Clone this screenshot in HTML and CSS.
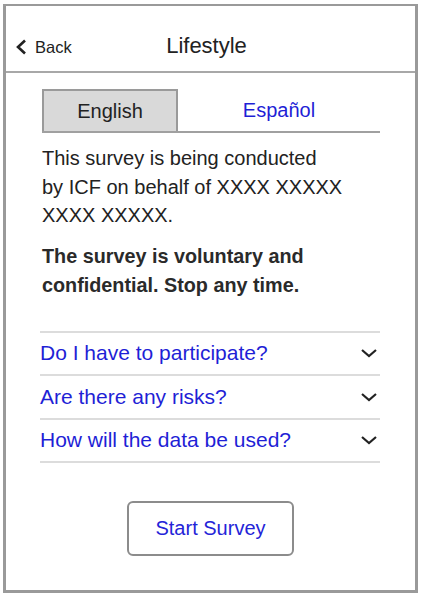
FILE: index.html
```html
<!DOCTYPE html>
<html lang="en">
<head>
  <meta charset="UTF-8" />
  <meta name="viewport" content="width=device-width, initial-scale=1.0"/>
  <title>Lifestyle</title>
  <link rel="stylesheet" href="styles.css">
</head>
<body>
  <div class="phone">
    <header class="topbar">
      <a class="back" href="#">
        <svg width="12" height="16" viewBox="0 0 12 16"><polyline points="10,1.5 3,8 10,14.5" fill="none" stroke="#222" stroke-width="2.6"/></svg>
        <span>Back</span>
      </a>
      <h1>Lifestyle</h1>
    </header>

    <main class="content">
      <div class="tabs">
        <button class="tab active">English</button>
        <button class="tab">Español</button>
      </div>

      <p class="intro">This survey is being conducted<br>by ICF on behalf of XXXX XXXXX<br>XXXX XXXXX.</p>
      <p class="notice">The survey is voluntary and<br>confidential. Stop any time.</p>

      <ul class="faq">
        <li>
          <span>Do I have to participate?</span>
          <svg width="18" height="10" viewBox="0 0 18 10"><polyline points="2,2 9,8 16,2" fill="none" stroke="#222" stroke-width="2.2"/></svg>
        </li>
        <li>
          <span>Are there any risks?</span>
          <svg width="18" height="10" viewBox="0 0 18 10"><polyline points="2,2 9,8 16,2" fill="none" stroke="#222" stroke-width="2.2"/></svg>
        </li>
        <li>
          <span>How will the data be used?</span>
          <svg width="18" height="10" viewBox="0 0 18 10"><polyline points="2,2 9,8 16,2" fill="none" stroke="#222" stroke-width="2.2"/></svg>
        </li>
      </ul>

      <div class="actions">
        <button class="start">Start Survey</button>
      </div>
    </main>
  </div>
</body>
</html>
```

FILE: styles.css
```css
body {
  margin: 0;
  padding: 4px 6px 6px 3px;
  font-family: 'Liberation Sans', Arial, sans-serif;
  background: #fff;
  color: #222;
}
.phone {
  height: 584px;
  border: 3px solid #9a9a9a;
  border-top-width: 2px;
  display: flex;
  flex-direction: column;
}
.topbar {
  height: 67px;
  box-sizing: border-box;
  padding-top: 17px;
  border-bottom: 2px solid #a8a8a8;
  display: flex;
  align-items: center;
  position: relative;
}
.back {
  display: flex;
  align-items: center;
  gap: 8px;
  padding-left: 9px;
  color: #222;
  text-decoration: none;
  font-size: 16.5px;
  position: relative;
  z-index: 1;
}
.topbar h1 {
  position: absolute;
  left: 0;
  right: 0;
  top: 27px;
  margin: 0;
  text-align: center;
  font-size: 22px;
  font-weight: normal;
  padding-right: 8px;
}
.content {
  padding: 16px 35px 0 36px;
}
.tabs {
  display: flex;
  border-bottom: 2px solid #a0a0a0;
}
.tab {
  flex: 1;
  height: 42px;
  border: none;
  background: none;
  font-family: inherit;
  font-size: 20px;
  color: #1f1fd6;
  padding: 0;
}
.tab.active {
  flex: 0 0 136px;
  background: #d9d9d9;
  border: 2px solid #9a9a9a;
  border-bottom: none;
  color: #222;
}
.intro {
  margin: 11px 0 0;
  font-size: 20px;
  line-height: 28.5px;
}
.notice {
  margin: 12px 0 0;
  font-size: 19.8px;
  font-weight: bold;
  line-height: 29px;
  color: #2a2a2a;
}
.faq {
  list-style: none;
  margin: 31px 0 0 -2px;
  padding: 0;
  border-top: 2px solid #dcdcdc;
}
.faq li {
  height: 41.5px;
  border-bottom: 2px solid #dcdcdc;
  display: flex;
  align-items: center;
  justify-content: space-between;
  font-size: 21px;
  color: #1f1fd6;
}
.faq svg {
  margin-right: 2px;
}
.actions {
  display: flex;
  justify-content: center;
  margin-top: 38px;
  padding-right: 1px;
}
.start {
  width: 167px;
  height: 55px;
  border: 2px solid #8c8c8c;
  border-radius: 6px;
  background: #fff;
  font-family: inherit;
  font-size: 20px;
  color: #2424d8;
}
```
